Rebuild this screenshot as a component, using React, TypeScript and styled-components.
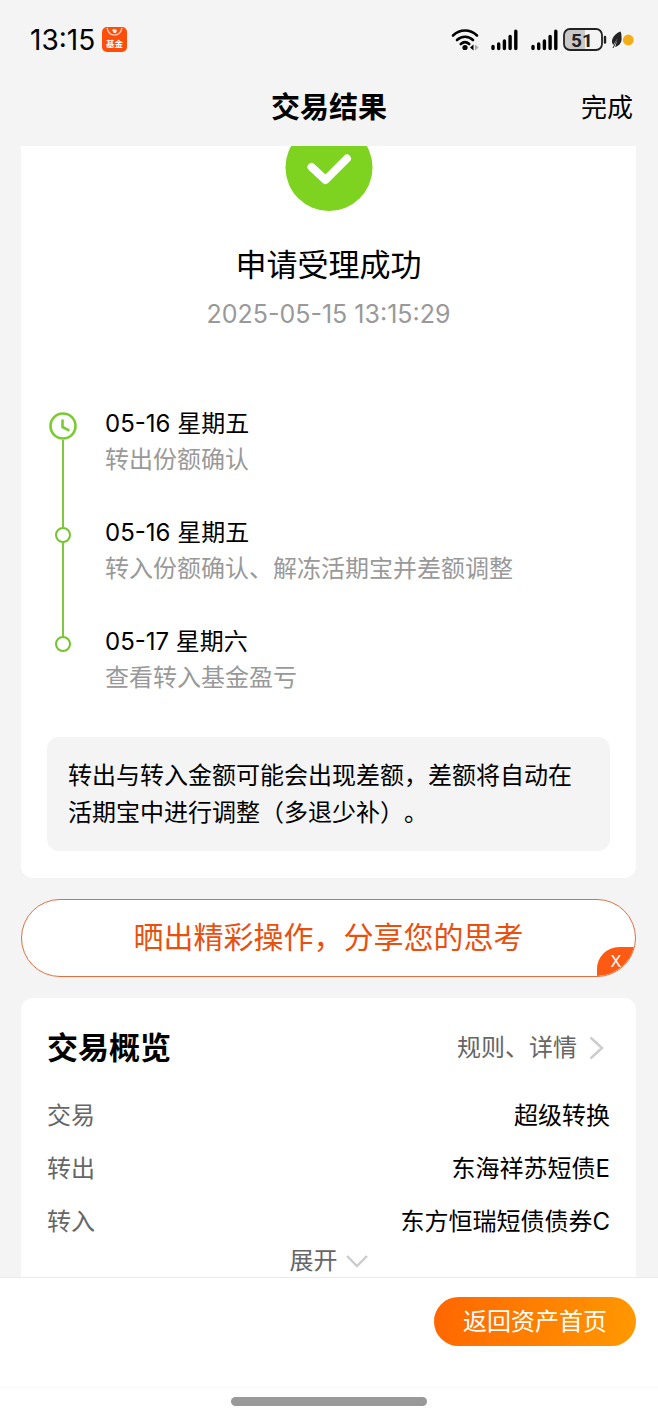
import React from 'react';
import styled, { createGlobalStyle } from 'styled-components';

const GlobalStyle = createGlobalStyle`
  * { box-sizing: border-box; }
  body {
    margin: 0;
    background: #f4f4f4;
    color: #000;
    font-family: Inter, "Noto Sans CJK SC", sans-serif;
    font-size: 24px;
    text-spacing-trim: space-all;
  }
  h1, h2, p, dl, dd, ol { margin: 0; padding: 0; }
  button { font: inherit; border: 0; padding: 0; background: none; color: inherit; cursor: pointer; }
  a { color: inherit; text-decoration: none; }
  svg { display: block; flex: none; }
`;

const Page = styled.div`
  display: flex;
  flex-direction: column;
  min-height: 100vh;
`;

const StatusBar = styled.div`
  display: flex;
  align-items: center;
  justify-content: space-between;
  height: 80px;
  padding: 0 24px 0 30px;
`;

const StatusGroup = styled.div<{ $gap: number }>`
  display: flex;
  align-items: center;
  gap: ${({ $gap }) => $gap}px;
`;

const Clock = styled.span`
  font-size: 28px;
  line-height: 32px;
`;

const Header = styled.header`
  display: grid;
  grid-template-columns: 1fr auto 1fr;
  align-items: center;
  height: 66px;
  padding: 0 25px 10px;
`;

const PageTitle = styled.h1`
  grid-column: 2;
  font-size: 29px;
  line-height: 44px;
  font-weight: 700;
`;

const DoneButton = styled.button`
  justify-self: end;
  font-size: 26px;
  line-height: 44px;
`;

const Content = styled.main`
  flex: 1;
  display: flex;
  flex-direction: column;
  gap: 21px;
  padding: 0 22px 0 21px;
`;

const ResultCard = styled.section`
  display: flex;
  flex-direction: column;
  align-items: center;
  padding: 0 26px 27px;
  background: #fff;
  border-radius: 0 0 12px 12px;
`;

const ResultTitle = styled.h2`
  margin-top: 32px;
  font-size: 31px;
  line-height: 44px;
  font-weight: 400;
`;

const ResultTime = styled.p`
  margin-top: 11px;
  font-size: 25px;
  line-height: 32px;
  color: #999;
`;

const Timeline = styled.ol`
  align-self: stretch;
  margin-top: 76px;
  list-style: none;
`;

const Step = styled.li`
  display: grid;
  grid-template-columns: 32px 1fr;
  column-gap: 26px;
`;

const Track = styled.div`
  display: flex;
  flex-direction: column;
  align-items: center;
`;

const TrackLead = styled.div<{ $height: number; $visible: boolean }>`
  width: 2px;
  height: ${({ $height }) => $height}px;
  background: ${({ $visible }) => ($visible ? '#7fc73c' : 'transparent')};
`;

const TrackLine = styled.div`
  flex: 1;
  width: 2px;
  background: #7fc73c;
`;

const Dot = styled.div`
  width: 16px;
  height: 16px;
  border: 2px solid #74c52c;
  border-radius: 50%;
`;

const StepText = styled.div<{ $last: boolean }>`
  padding-bottom: ${({ $last }) => ($last ? 0 : 37)}px;
  line-height: 36px;
`;

const StepNote = styled.p`
  color: #999;
`;

const Notice = styled.p`
  align-self: stretch;
  margin-top: 41px;
  padding: 20px 21px;
  border-radius: 12px;
  background: #f4f4f4;
  line-height: 37px;
`;

const ShareBanner = styled.div`
  position: relative;
  display: flex;
  height: 78px;
  border: 1px solid #e0703f;
  border-radius: 39px;
  background: #fff;
  overflow: hidden;
`;

const ShareLink = styled.a`
  flex: 1;
  text-align: center;
  font-size: 30px;
  line-height: 74px;
  color: #e9500f;
`;

const CloseShare = styled.button`
  position: absolute;
  right: 0;
  bottom: 0;
  width: 38px;
  height: 29px;
  border-radius: 22px 0 0 0;
  background: #ff5a14;
  color: #fff;
  font-size: 16px;
  line-height: 29px;
`;

const OverviewCard = styled.section`
  flex: 1;
  display: flex;
  flex-direction: column;
  padding: 28px 26px 2px;
  background: #fff;
  border-radius: 12px 12px 0 0;
`;

const OverviewHead = styled.div`
  display: flex;
  align-items: center;
  justify-content: space-between;
  margin-bottom: 19px;
`;

const OverviewTitle = styled.h2`
  font-size: 31px;
  line-height: 44px;
  font-weight: 700;
`;

const RulesLink = styled.a`
  display: flex;
  align-items: center;
  gap: 12px;
  padding-right: 6px;
  line-height: 44px;
  color: #666;
`;

const DetailRow = styled.div`
  display: flex;
  justify-content: space-between;
  line-height: 53px;
`;

const DetailLabel = styled.dt`
  color: #666;
`;

const ExpandButton = styled.button`
  display: flex;
  align-items: center;
  align-self: center;
  gap: 8px;
  height: 26px;
  line-height: 26px;
  color: #666;
`;

const Footer = styled.footer`
  display: flex;
  justify-content: flex-end;
  height: 110px;
  padding: 19px 22px 0;
  border-top: 1px solid #ebebeb;
  background: #fff;
`;

const HomeButton = styled.button`
  height: 49px;
  padding: 0 29px;
  border-radius: 25px;
  background: linear-gradient(100deg, #ff6600, #ff9900);
  color: #fff;
  line-height: 47px;
`;

const GestureArea = styled.div`
  display: flex;
  justify-content: center;
  height: 29px;
  padding-top: 9px;
  border-top: 1px solid #f6f6f6;
  background: #fff;
`;

const GestureBar = styled.div`
  width: 196px;
  height: 9px;
  border-radius: 5px;
  background: #999;
`;

const FundAppIcon = () => (
  <svg width="26" height="26" viewBox="0 0 26 26" aria-hidden="true">
    <rect x="1" y="0" width="25" height="25" rx="5" fill="#ff4d0a" />
    <path d="M6 1c1 4 4 7 7.500 7S20 5 21 1" fill="none" stroke="#ffd9c8" strokeWidth="1.200" />
    <path d="M11 3l2-1 3 1-1 3-2 0z" fill="#ffe9df" />
    <text x="13.500" y="20" textAnchor="middle" fontSize="8.500" fontWeight="700" fill="#fff">基金</text>
  </svg>
);

const WifiIcon = () => (
  <svg width="28" height="24" viewBox="0 0 28 24" aria-hidden="true">
    <g fill="none" stroke="#000" strokeWidth="2.600" strokeLinecap="round">
      <path d="M2 7.500C9 .8 19 .8 26 7.500" />
      <path d="M6 12c4.500-4.300 11.500-4.300 16 0" />
      <path d="M9.800 16c2.600-2.400 5.800-2.400 8.400 0" />
    </g>
    <circle cx="14" cy="19.500" r="2.600" />
    <path d="M22.500 16.500v6l-3.500-3z" />
    <path d="M24 16.500v6l3.500-3z" fill="#aaa" />
  </svg>
);

const SignalIcon = () => (
  <svg width="28" height="22" viewBox="0 0 28 22" aria-hidden="true">
    <g stroke="#000" strokeWidth="3.400" strokeLinecap="round">
      <path d="M2 17.500v2M7.700 15v4.500M13.400 12v7.500M19.100 7.500v12M24.800 2.200v17.300" />
    </g>
  </svg>
);

const BatteryIcon = () => (
  <svg width="44" height="24" viewBox="0 0 44 24" aria-label="51%">
    <rect x="1" y="1" width="38" height="21" rx="6" fill="#f4f4f4" />
    <path d="M7 1h15v21H7a6 6 0 0 1-6-6V7a6 6 0 0 1 6-6z" fill="#c8c8c8" />
    <rect x="1" y="1" width="38" height="21" rx="6" fill="none" stroke="#222" strokeWidth="1.800" />
    <path d="M42 9v5.500" stroke="#222" strokeWidth="2.400" strokeLinecap="round" />
    <text x="19" y="18.500" textAnchor="middle" fontFamily="Roboto, sans-serif" fontSize="19" fontWeight="700" fill="#222">51</text>
  </svg>
);

const LeafIcon = () => (
  <svg width="23" height="18" viewBox="0 0 23 18" aria-hidden="true">
    <path d="M9.500 .5C4.500 2.500 .8 6 1 11.500L2.200 14 6.800 7 4.200 16C8 15 10.800 11.500 10.600 7.500 10.500 5 10.600 2.500 9.500 .5z" fill="#222" />
    <path d="M2 17L7 7" stroke="#222" strokeWidth="1" />
    <circle cx="17.300" cy="9" r="5.400" fill="#f3ae16" />
  </svg>
);

/* The success badge is scrolled partly under the header. */
const SuccessIcon = () => (
  <svg width="88" height="65" viewBox="0 22 88 65" aria-hidden="true">
    <circle cx="44" cy="43.500" r="43.500" fill="#7ed321" />
    <path d="M26.500 43L40.500 56 62 34.500" fill="none" stroke="#fff" strokeWidth="8" strokeLinecap="round" strokeLinejoin="round" />
  </svg>
);

const ClockIcon = () => (
  <svg width="28" height="28" viewBox="0 0 28 28" aria-hidden="true">
    <circle cx="14" cy="14" r="12.500" fill="none" stroke="#7acb2e" strokeWidth="2.600" />
    <path d="M13.500 8.500V15l6 3.200" fill="none" stroke="#7acb2e" strokeWidth="2.600" strokeLinecap="round" strokeLinejoin="round" />
  </svg>
);

const ChevronRight = () => (
  <svg width="15" height="24" viewBox="0 0 15 24" aria-hidden="true">
    <path d="M1.500 1.500L13 12 1.500 22.500" fill="none" stroke="#ccc" strokeWidth="2.400" />
  </svg>
);

const ChevronDown = () => (
  <svg width="22" height="14" viewBox="0 0 22 14" aria-hidden="true">
    <path d="M1 2l10 10L21 2" fill="none" stroke="#ccc" strokeWidth="2.400" />
  </svg>
);

const steps = [
  { date: '05-16 星期五', note: '转出份额确认' },
  { date: '05-16 星期五', note: '转入份额确认、解冻活期宝并差额调整' },
  { date: '05-17 星期六', note: '查看转入基金盈亏' },
];

const details = [
  { label: '交易', value: '超级转换' },
  { label: '转出', value: '东海祥苏短债E' },
  { label: '转入', value: '东方恒瑞短债债券C' },
];

export default function App() {
  return (
    <Page lang="zh-CN">
      <GlobalStyle />
      <StatusBar>
        <StatusGroup $gap={6}>
          <Clock>13:15</Clock>
          <FundAppIcon />
        </StatusGroup>
        <StatusGroup $gap={4}>
          <StatusGroup $gap={12}>
            <WifiIcon />
            <SignalIcon />
            <SignalIcon />
          </StatusGroup>
          <BatteryIcon />
          <LeafIcon />
        </StatusGroup>
      </StatusBar>
      <Header>
        <PageTitle>交易结果</PageTitle>
        <DoneButton>完成</DoneButton>
      </Header>
      <Content>
        <ResultCard>
          <SuccessIcon />
          <ResultTitle>申请受理成功</ResultTitle>
          <ResultTime>2025-05-15 13:15:29</ResultTime>
          <Timeline>
            {steps.map((step, i) => {
              const first = i === 0;
              const last = i === steps.length - 1;
              return (
                <Step key={i}>
                  <Track>
                    <TrackLead $height={first ? 6 : 12} $visible={!first} />
                    {first ? <ClockIcon /> : <Dot />}
                    {!last && <TrackLine />}
                  </Track>
                  <StepText $last={last}>
                    <p>{step.date}</p>
                    <StepNote>{step.note}</StepNote>
                  </StepText>
                </Step>
              );
            })}
          </Timeline>
          <Notice>转出与转入金额可能会出现差额，差额将自动在活期宝中进行调整（多退少补）。</Notice>
        </ResultCard>
        <ShareBanner>
          <ShareLink href="#share">晒出精彩操作，分享您的思考</ShareLink>
          <CloseShare aria-label="关闭">X</CloseShare>
        </ShareBanner>
        <OverviewCard>
          <OverviewHead>
            <OverviewTitle>交易概览</OverviewTitle>
            <RulesLink href="#rules">
              规则、详情
              <ChevronRight />
            </RulesLink>
          </OverviewHead>
          <dl>
            {details.map((d) => (
              <DetailRow key={d.label}>
                <DetailLabel>{d.label}</DetailLabel>
                <dd>{d.value}</dd>
              </DetailRow>
            ))}
          </dl>
          <ExpandButton>
            展开
            <ChevronDown />
          </ExpandButton>
        </OverviewCard>
      </Content>
      <Footer>
        <HomeButton>返回资产首页</HomeButton>
      </Footer>
      <GestureArea>
        <GestureBar />
      </GestureArea>
    </Page>
  );
}
